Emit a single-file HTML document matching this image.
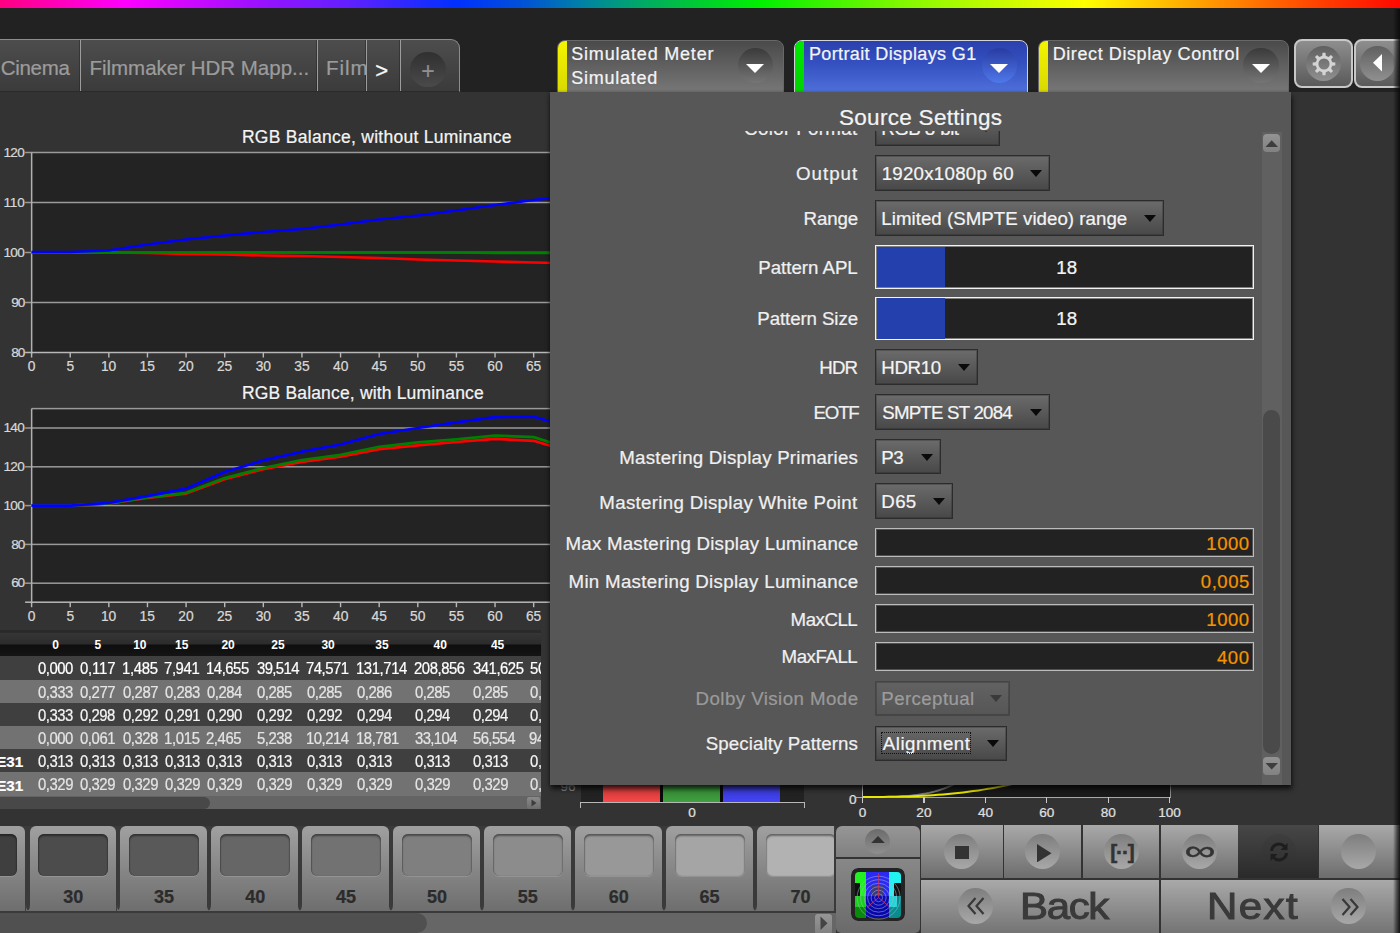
<!DOCTYPE html>
<html><head><meta charset="utf-8"><title>Source Settings</title>
<style>
*{box-sizing:border-box;margin:0;padding:0}
html,body{width:1400px;height:933px;overflow:hidden;background:#333;font-family:"Liberation Sans",sans-serif;color:#f0f0f0}
.abs{position:absolute}
#root{position:relative;width:1400px;height:933px;overflow:hidden;background:#333}
#rainbow{left:0;top:0;width:1400px;height:8.5px;background:linear-gradient(90deg,#ff0080 0,#ff00ff 125px,#a010ff 250px,#6020ff 350px,#0030ff 455px,#0050d8 520px,#0080a8 580px,#00a868 640px,#00cc30 700px,#00f000 760px,#40f400 830px,#80f800 900px,#c8fc00 1000px,#ffff00 1085px,#ffa000 1200px,#ff4000 1320px,#ff0800 1400px)}
#topbar{left:0;top:8px;width:1400px;height:84px;background:#222}
.t{position:absolute;white-space:nowrap;line-height:1;-webkit-text-stroke:.22px currentColor}
</style></head><body><div id="root">
<div id="rainbow" class="abs"></div>
<div id="topbar" class="abs"></div>
<div class="abs" style="left:-10px;top:39.4px;width:469.8px;height:52.6px;background:linear-gradient(#4d4d4d,#3b3b3b);border:1px solid #8c8c8c;border-bottom:1px solid #2a2a2a;border-radius:0 9px 0 0"></div><div class="abs" style="left:78.9px;top:40.4px;width:1px;height:50.6px;background:rgba(30,30,30,.45)"></div><div class="abs" style="left:79.9px;top:40.4px;width:1.1px;height:50.6px;background:#9c9c9c"></div><div class="abs" style="left:315.9px;top:40.4px;width:1px;height:50.6px;background:rgba(30,30,30,.45)"></div><div class="abs" style="left:316.9px;top:40.4px;width:1.1px;height:50.6px;background:#9c9c9c"></div><div class="abs" style="left:365.1px;top:40.4px;width:1px;height:50.6px;background:rgba(30,30,30,.45)"></div><div class="abs" style="left:366.1px;top:40.4px;width:1.1px;height:50.6px;background:#9c9c9c"></div><div class="abs" style="left:399.2px;top:40.4px;width:1px;height:50.6px;background:rgba(30,30,30,.45)"></div><div class="abs" style="left:400.2px;top:40.4px;width:1.1px;height:50.6px;background:#9c9c9c"></div><span class="t" style="left:0.84px;top:57.65px;font-size:20.5px;color:#9c9c9c;letter-spacing:-0.322px;">Cinema</span><span class="t" style="left:89.40px;top:57.65px;font-size:20.5px;color:#9c9c9c;letter-spacing:-0.005px;">Filmmaker HDR Mapp...</span><div class="abs" style="left:318px;top:41px;width:48px;height:50px;overflow:hidden"><span class="t" style="left:8.00px;top:16.65px;font-size:20.5px;color:#9c9c9c;letter-spacing:0.981px;">Film</span></div><span class="t" style="left:375.37px;top:60.18px;font-size:22px;color:#f8f8f8;-webkit-text-stroke:.3px #f8f8f8;">&gt;</span><div class="abs" style="left:410.4px;top:51.99999999999999px;width:35.2px;height:35.2px;background:linear-gradient(#303030,#4a4a4a);border-radius:50%"></div><span class="t" style="left:421.37px;top:59.53px;font-size:23px;color:#909090;">+</span>
<div class="abs" style="left:31.6px;top:152.5px;width:528.4px;height:200px;background:#232323"></div><svg class="abs" style="left:0;top:0" width="560" height="700"><rect x="25.1" y="151.75" width="560" height="1.5" fill="#9a9a9a"/><rect x="25.1" y="201.75" width="560" height="1.5" fill="#9a9a9a"/><rect x="25.1" y="251.75" width="560" height="1.5" fill="#9a9a9a"/><rect x="25.1" y="301.75" width="560" height="1.5" fill="#9a9a9a"/><rect x="30.900000000000002" y="152.5" width="1.5" height="201.0" fill="#b0b0b0"/><rect x="25.1" y="351.75" width="560" height="1.5" fill="#b8b8b8"/><rect x="30.90" y="352.5" width="1.4" height="5" fill="#b8b8b8"/><rect x="69.52" y="352.5" width="1.4" height="5" fill="#b8b8b8"/><rect x="108.14" y="352.5" width="1.4" height="5" fill="#b8b8b8"/><rect x="146.76" y="352.5" width="1.4" height="5" fill="#b8b8b8"/><rect x="185.38" y="352.5" width="1.4" height="5" fill="#b8b8b8"/><rect x="224.00" y="352.5" width="1.4" height="5" fill="#b8b8b8"/><rect x="262.62" y="352.5" width="1.4" height="5" fill="#b8b8b8"/><rect x="301.24" y="352.5" width="1.4" height="5" fill="#b8b8b8"/><rect x="339.86" y="352.5" width="1.4" height="5" fill="#b8b8b8"/><rect x="378.48" y="352.5" width="1.4" height="5" fill="#b8b8b8"/><rect x="417.10" y="352.5" width="1.4" height="5" fill="#b8b8b8"/><rect x="455.72" y="352.5" width="1.4" height="5" fill="#b8b8b8"/><rect x="494.34" y="352.5" width="1.4" height="5" fill="#b8b8b8"/><rect x="532.96" y="352.5" width="1.4" height="5" fill="#b8b8b8"/><polyline points="31.6,252.5 70.2,252.5 108.8,252.5 147.5,253.0 186.1,253.8 224.7,254.5 263.3,255.5 301.9,256.0 340.6,257.0 379.2,258.0 417.8,259.5 456.4,260.5 495.0,261.5 533.7,262.5 556.8,263.0" fill="none" stroke="#ff0000" stroke-width="2.7" stroke-linejoin="round"/><polyline points="31.6,252.5 70.2,252.5 108.8,252.5 147.5,252.5 186.1,252.5 224.7,252.5 263.3,252.5 301.9,252.5 340.6,252.5 379.2,252.5 417.8,252.5 456.4,252.5 495.0,252.8 533.7,253.0 556.8,253.0" fill="none" stroke="#008000" stroke-width="2.7" stroke-linejoin="round"/><polyline points="31.6,252.0 70.2,252.0 108.8,250.5 147.5,244.5 186.1,239.5 224.7,235.5 263.3,232.0 301.9,229.0 340.6,224.5 379.2,219.5 417.8,215.5 456.4,210.5 495.0,205.0 533.7,200.0 556.8,197.5" fill="none" stroke="#0000ff" stroke-width="2.7" stroke-linejoin="round"/></svg><span class="t" style="left:241.93px;top:128.69px;font-size:17.5px;color:#f4f4f4;letter-spacing:0.273px;">RGB Balance, without Luminance</span><span class="t" style="left:3.50px;top:145.79px;font-size:13.6px;color:#d8d8d8;letter-spacing:-0.693px;">120</span><span class="t" style="left:3.50px;top:195.79px;font-size:13.6px;color:#d8d8d8;letter-spacing:-0.185px;">110</span><span class="t" style="left:3.50px;top:245.79px;font-size:13.6px;color:#d8d8d8;letter-spacing:-0.693px;">100</span><span class="t" style="left:11.28px;top:295.79px;font-size:13.6px;color:#d8d8d8;letter-spacing:-1.200px;">90</span><span class="t" style="left:11.34px;top:345.79px;font-size:13.6px;color:#d8d8d8;letter-spacing:-1.200px;">80</span><span class="t" style="left:27.75px;top:360.32px;font-size:13.8px;color:#d8d8d8;">0</span><span class="t" style="left:66.40px;top:360.32px;font-size:13.8px;color:#d8d8d8;">5</span><span class="t" style="left:100.90px;top:360.32px;font-size:13.8px;color:#d8d8d8;">10</span><span class="t" style="left:139.56px;top:360.32px;font-size:13.8px;color:#d8d8d8;">15</span><span class="t" style="left:178.30px;top:360.32px;font-size:13.8px;color:#d8d8d8;">20</span><span class="t" style="left:216.95px;top:360.32px;font-size:13.8px;color:#d8d8d8;">25</span><span class="t" style="left:255.63px;top:360.32px;font-size:13.8px;color:#d8d8d8;">30</span><span class="t" style="left:294.29px;top:360.32px;font-size:13.8px;color:#d8d8d8;">35</span><span class="t" style="left:332.97px;top:360.32px;font-size:13.8px;color:#d8d8d8;">40</span><span class="t" style="left:371.62px;top:360.32px;font-size:13.8px;color:#d8d8d8;">45</span><span class="t" style="left:410.11px;top:360.32px;font-size:13.8px;color:#d8d8d8;">50</span><span class="t" style="left:448.77px;top:360.32px;font-size:13.8px;color:#d8d8d8;">55</span><span class="t" style="left:487.26px;top:360.32px;font-size:13.8px;color:#d8d8d8;">60</span><span class="t" style="left:525.91px;top:360.32px;font-size:13.8px;color:#d8d8d8;">65</span><div class="abs" style="left:31.6px;top:408.6px;width:528.4px;height:193.6px;background:#232323"></div><svg class="abs" style="left:0;top:0" width="560" height="700"><rect x="31.6" y="407.85" width="560" height="1.5" fill="#9a9a9a"/><rect x="25.1" y="427.25" width="560" height="1.5" fill="#9a9a9a"/><rect x="25.1" y="466.05" width="560" height="1.5" fill="#9a9a9a"/><rect x="25.1" y="504.85" width="560" height="1.5" fill="#9a9a9a"/><rect x="25.1" y="543.65" width="560" height="1.5" fill="#9a9a9a"/><rect x="25.1" y="582.45" width="560" height="1.5" fill="#9a9a9a"/><rect x="30.900000000000002" y="408.6" width="1.5" height="194.60000000000002" fill="#b0b0b0"/><rect x="25.1" y="601.45" width="560" height="1.5" fill="#b8b8b8"/><rect x="30.90" y="602.2" width="1.4" height="5" fill="#b8b8b8"/><rect x="69.52" y="602.2" width="1.4" height="5" fill="#b8b8b8"/><rect x="108.14" y="602.2" width="1.4" height="5" fill="#b8b8b8"/><rect x="146.76" y="602.2" width="1.4" height="5" fill="#b8b8b8"/><rect x="185.38" y="602.2" width="1.4" height="5" fill="#b8b8b8"/><rect x="224.00" y="602.2" width="1.4" height="5" fill="#b8b8b8"/><rect x="262.62" y="602.2" width="1.4" height="5" fill="#b8b8b8"/><rect x="301.24" y="602.2" width="1.4" height="5" fill="#b8b8b8"/><rect x="339.86" y="602.2" width="1.4" height="5" fill="#b8b8b8"/><rect x="378.48" y="602.2" width="1.4" height="5" fill="#b8b8b8"/><rect x="417.10" y="602.2" width="1.4" height="5" fill="#b8b8b8"/><rect x="455.72" y="602.2" width="1.4" height="5" fill="#b8b8b8"/><rect x="494.34" y="602.2" width="1.4" height="5" fill="#b8b8b8"/><rect x="532.96" y="602.2" width="1.4" height="5" fill="#b8b8b8"/><polyline points="31.6,505.6 70.2,505.6 108.8,503.5 147.5,498.0 186.1,493.6 224.7,479.2 263.3,469.1 301.9,462.0 340.6,456.7 379.2,449.1 417.8,445.3 456.4,442.0 495.0,438.9 533.7,440.8 556.8,447.8" fill="none" stroke="#ff0000" stroke-width="2.7" stroke-linejoin="round"/><polyline points="31.6,505.6 70.2,505.6 108.8,503.3 147.5,497.5 186.1,492.8 224.7,478.1 263.3,468.0 301.9,460.0 340.6,454.8 379.2,446.8 417.8,442.4 456.4,439.3 495.0,435.6 533.7,437.1 556.8,444.5" fill="none" stroke="#008000" stroke-width="2.7" stroke-linejoin="round"/><polyline points="31.6,505.6 70.2,505.6 108.8,502.9 147.5,496.1 186.1,488.7 224.7,472.0 263.3,460.4 301.9,451.7 340.6,444.5 379.2,434.0 417.8,428.0 456.4,422.4 495.0,417.1 533.7,416.7 556.8,423.2" fill="none" stroke="#0000ff" stroke-width="2.7" stroke-linejoin="round"/></svg><span class="t" style="left:241.93px;top:384.69px;font-size:17.5px;color:#f4f4f4;letter-spacing:0.170px;">RGB Balance, with Luminance</span><span class="t" style="left:3.50px;top:421.29px;font-size:13.6px;color:#d8d8d8;letter-spacing:-0.693px;">140</span><span class="t" style="left:3.50px;top:460.09px;font-size:13.6px;color:#d8d8d8;letter-spacing:-0.693px;">120</span><span class="t" style="left:3.50px;top:498.89px;font-size:13.6px;color:#d8d8d8;letter-spacing:-0.693px;">100</span><span class="t" style="left:11.34px;top:537.69px;font-size:13.6px;color:#d8d8d8;letter-spacing:-1.200px;">80</span><span class="t" style="left:11.21px;top:576.49px;font-size:13.6px;color:#d8d8d8;letter-spacing:-1.200px;">60</span><span class="t" style="left:27.75px;top:610.32px;font-size:13.8px;color:#d8d8d8;">0</span><span class="t" style="left:66.40px;top:610.32px;font-size:13.8px;color:#d8d8d8;">5</span><span class="t" style="left:100.90px;top:610.32px;font-size:13.8px;color:#d8d8d8;">10</span><span class="t" style="left:139.56px;top:610.32px;font-size:13.8px;color:#d8d8d8;">15</span><span class="t" style="left:178.30px;top:610.32px;font-size:13.8px;color:#d8d8d8;">20</span><span class="t" style="left:216.95px;top:610.32px;font-size:13.8px;color:#d8d8d8;">25</span><span class="t" style="left:255.63px;top:610.32px;font-size:13.8px;color:#d8d8d8;">30</span><span class="t" style="left:294.29px;top:610.32px;font-size:13.8px;color:#d8d8d8;">35</span><span class="t" style="left:332.97px;top:610.32px;font-size:13.8px;color:#d8d8d8;">40</span><span class="t" style="left:371.62px;top:610.32px;font-size:13.8px;color:#d8d8d8;">45</span><span class="t" style="left:410.11px;top:610.32px;font-size:13.8px;color:#d8d8d8;">50</span><span class="t" style="left:448.77px;top:610.32px;font-size:13.8px;color:#d8d8d8;">55</span><span class="t" style="left:487.26px;top:610.32px;font-size:13.8px;color:#d8d8d8;">60</span><span class="t" style="left:525.91px;top:610.32px;font-size:13.8px;color:#d8d8d8;">65</span>
<div class="abs" style="left:0px;top:630px;width:540.6px;height:3px;background:#2a2a2a"></div><div class="abs" style="left:0px;top:632.6px;width:540.6px;height:23.4px;background:linear-gradient(#363636 0,#2c2c2c 46%,#0e0e0e 54%,#141414 100%)"></div><span class="t" style="left:52.18px;top:639.04px;font-size:12px;color:#fff;font-weight:700;-webkit-text-stroke:0;">0</span><span class="t" style="left:94.40px;top:639.04px;font-size:12px;color:#fff;font-weight:700;-webkit-text-stroke:0;">5</span><span class="t" style="left:133.19px;top:639.04px;font-size:12px;color:#fff;font-weight:700;-webkit-text-stroke:0;">10</span><span class="t" style="left:175.09px;top:639.04px;font-size:12px;color:#fff;font-weight:700;-webkit-text-stroke:0;">15</span><span class="t" style="left:221.38px;top:639.04px;font-size:12px;color:#fff;font-weight:700;-webkit-text-stroke:0;">20</span><span class="t" style="left:271.28px;top:639.04px;font-size:12px;color:#fff;font-weight:700;-webkit-text-stroke:0;">25</span><span class="t" style="left:321.44px;top:639.04px;font-size:12px;color:#fff;font-weight:700;-webkit-text-stroke:0;">30</span><span class="t" style="left:375.34px;top:639.04px;font-size:12px;color:#fff;font-weight:700;-webkit-text-stroke:0;">35</span><span class="t" style="left:433.50px;top:639.04px;font-size:12px;color:#fff;font-weight:700;-webkit-text-stroke:0;">40</span><span class="t" style="left:490.91px;top:639.04px;font-size:12px;color:#fff;font-weight:700;-webkit-text-stroke:0;">45</span><div class="abs" style="left:0;top:0;width:540.6px;height:800px;overflow:hidden"><div class="abs" style="left:0px;top:656px;width:540.6px;height:23.7px;background:#3f3f3f"></div><span class="t" style="left:38.02px;top:661.31px;font-size:16px;color:#fff;letter-spacing:-0.515px;transform:scaleX(0.93);transform-origin:0 0;">0,000</span><span class="t" style="left:80.02px;top:661.31px;font-size:16px;color:#fff;letter-spacing:-0.172px;transform:scaleX(0.93);transform-origin:0 0;">0,117</span><span class="t" style="left:122.00px;top:661.31px;font-size:16px;color:#fff;letter-spacing:-0.359px;transform:scaleX(0.93);transform-origin:0 0;">1,485</span><span class="t" style="left:164.34px;top:661.31px;font-size:16px;color:#fff;letter-spacing:-0.422px;transform:scaleX(0.93);transform-origin:0 0;">7,941</span><span class="t" style="left:206.00px;top:661.31px;font-size:16px;color:#fff;letter-spacing:-0.496px;transform:scaleX(0.93);transform-origin:0 0;">14,655</span><span class="t" style="left:256.58px;top:661.31px;font-size:16px;color:#fff;letter-spacing:-0.658px;transform:scaleX(0.93);transform-origin:0 0;">39,514</span><span class="t" style="left:306.34px;top:661.31px;font-size:16px;color:#fff;letter-spacing:-0.546px;transform:scaleX(0.93);transform-origin:0 0;">74,571</span><span class="t" style="left:356.00px;top:661.31px;font-size:16px;color:#fff;letter-spacing:-0.441px;transform:scaleX(0.93);transform-origin:0 0;">131,714</span><span class="t" style="left:414.40px;top:661.31px;font-size:16px;color:#fff;letter-spacing:-0.483px;transform:scaleX(0.93);transform-origin:0 0;">208,856</span><span class="t" style="left:472.58px;top:661.31px;font-size:16px;color:#fff;letter-spacing:-0.514px;transform:scaleX(0.93);transform-origin:0 0;">341,625</span><span class="t" style="left:529.52px;top:661.31px;font-size:16px;color:#fff;transform:scaleX(0.93);transform-origin:0 0;letter-spacing:-.4px;">50</span><div class="abs" style="left:0px;top:679.7px;width:540.6px;height:23.2px;background:#727272"></div><span class="t" style="left:38.02px;top:684.76px;font-size:16px;color:#e4e4e4;letter-spacing:-0.500px;transform:scaleX(0.93);transform-origin:0 0;">0,333</span><span class="t" style="left:80.02px;top:684.76px;font-size:16px;color:#e4e4e4;letter-spacing:-0.469px;transform:scaleX(0.93);transform-origin:0 0;">0,277</span><span class="t" style="left:122.52px;top:684.76px;font-size:16px;color:#e4e4e4;letter-spacing:-0.469px;transform:scaleX(0.93);transform-origin:0 0;">0,287</span><span class="t" style="left:164.52px;top:684.76px;font-size:16px;color:#e4e4e4;letter-spacing:-0.500px;transform:scaleX(0.93);transform-origin:0 0;">0,283</span><span class="t" style="left:206.52px;top:684.76px;font-size:16px;color:#e4e4e4;letter-spacing:-0.547px;transform:scaleX(0.93);transform-origin:0 0;">0,284</span><span class="t" style="left:256.52px;top:684.76px;font-size:16px;color:#e4e4e4;letter-spacing:-0.500px;transform:scaleX(0.93);transform-origin:0 0;">0,285</span><span class="t" style="left:306.52px;top:684.76px;font-size:16px;color:#e4e4e4;letter-spacing:-0.500px;transform:scaleX(0.93);transform-origin:0 0;">0,285</span><span class="t" style="left:356.52px;top:684.76px;font-size:16px;color:#e4e4e4;letter-spacing:-0.500px;transform:scaleX(0.93);transform-origin:0 0;">0,286</span><span class="t" style="left:414.52px;top:684.76px;font-size:16px;color:#e4e4e4;letter-spacing:-0.500px;transform:scaleX(0.93);transform-origin:0 0;">0,285</span><span class="t" style="left:472.52px;top:684.76px;font-size:16px;color:#e4e4e4;letter-spacing:-0.500px;transform:scaleX(0.93);transform-origin:0 0;">0,285</span><span class="t" style="left:529.52px;top:684.76px;font-size:16px;color:#e4e4e4;transform:scaleX(0.93);transform-origin:0 0;letter-spacing:-.4px;">0,</span><div class="abs" style="left:0px;top:702.9px;width:540.6px;height:23.1px;background:#3f3f3f"></div><span class="t" style="left:38.02px;top:707.91px;font-size:16px;color:#f4f4f4;letter-spacing:-0.500px;transform:scaleX(0.93);transform-origin:0 0;">0,333</span><span class="t" style="left:80.02px;top:707.91px;font-size:16px;color:#f4f4f4;letter-spacing:-0.500px;transform:scaleX(0.93);transform-origin:0 0;">0,298</span><span class="t" style="left:122.52px;top:707.91px;font-size:16px;color:#f4f4f4;letter-spacing:-0.469px;transform:scaleX(0.93);transform-origin:0 0;">0,292</span><span class="t" style="left:164.52px;top:707.91px;font-size:16px;color:#f4f4f4;letter-spacing:-0.469px;transform:scaleX(0.93);transform-origin:0 0;">0,291</span><span class="t" style="left:206.52px;top:707.91px;font-size:16px;color:#f4f4f4;letter-spacing:-0.515px;transform:scaleX(0.93);transform-origin:0 0;">0,290</span><span class="t" style="left:256.52px;top:707.91px;font-size:16px;color:#f4f4f4;letter-spacing:-0.469px;transform:scaleX(0.93);transform-origin:0 0;">0,292</span><span class="t" style="left:306.52px;top:707.91px;font-size:16px;color:#f4f4f4;letter-spacing:-0.469px;transform:scaleX(0.93);transform-origin:0 0;">0,292</span><span class="t" style="left:356.52px;top:707.91px;font-size:16px;color:#f4f4f4;letter-spacing:-0.547px;transform:scaleX(0.93);transform-origin:0 0;">0,294</span><span class="t" style="left:414.52px;top:707.91px;font-size:16px;color:#f4f4f4;letter-spacing:-0.547px;transform:scaleX(0.93);transform-origin:0 0;">0,294</span><span class="t" style="left:472.52px;top:707.91px;font-size:16px;color:#f4f4f4;letter-spacing:-0.547px;transform:scaleX(0.93);transform-origin:0 0;">0,294</span><span class="t" style="left:529.52px;top:707.91px;font-size:16px;color:#f4f4f4;transform:scaleX(0.93);transform-origin:0 0;letter-spacing:-.4px;">0,</span><div class="abs" style="left:0px;top:726px;width:540.6px;height:22.9px;background:#727272"></div><span class="t" style="left:38.02px;top:730.91px;font-size:16px;color:#e4e4e4;letter-spacing:-0.515px;transform:scaleX(0.93);transform-origin:0 0;">0,000</span><span class="t" style="left:80.02px;top:730.91px;font-size:16px;color:#e4e4e4;letter-spacing:-0.469px;transform:scaleX(0.93);transform-origin:0 0;">0,061</span><span class="t" style="left:122.52px;top:730.91px;font-size:16px;color:#e4e4e4;letter-spacing:-0.500px;transform:scaleX(0.93);transform-origin:0 0;">0,328</span><span class="t" style="left:164.00px;top:730.91px;font-size:16px;color:#e4e4e4;letter-spacing:-0.359px;transform:scaleX(0.93);transform-origin:0 0;">1,015</span><span class="t" style="left:206.40px;top:730.91px;font-size:16px;color:#e4e4e4;letter-spacing:-0.469px;transform:scaleX(0.93);transform-origin:0 0;">2,465</span><span class="t" style="left:256.52px;top:730.91px;font-size:16px;color:#e4e4e4;letter-spacing:-0.500px;transform:scaleX(0.93);transform-origin:0 0;">5,238</span><span class="t" style="left:306.00px;top:730.91px;font-size:16px;color:#e4e4e4;letter-spacing:-0.533px;transform:scaleX(0.93);transform-origin:0 0;">10,214</span><span class="t" style="left:356.00px;top:730.91px;font-size:16px;color:#e4e4e4;letter-spacing:-0.471px;transform:scaleX(0.93);transform-origin:0 0;">18,781</span><span class="t" style="left:414.58px;top:730.91px;font-size:16px;color:#e4e4e4;letter-spacing:-0.658px;transform:scaleX(0.93);transform-origin:0 0;">33,104</span><span class="t" style="left:472.52px;top:730.91px;font-size:16px;color:#e4e4e4;letter-spacing:-0.646px;transform:scaleX(0.93);transform-origin:0 0;">56,554</span><span class="t" style="left:529.40px;top:730.91px;font-size:16px;color:#e4e4e4;transform:scaleX(0.93);transform-origin:0 0;letter-spacing:-.4px;">94</span><div class="abs" style="left:0px;top:748.9px;width:540.6px;height:22.9px;background:#3f3f3f"></div><span class="t" style="left:-3.84px;top:754.18px;font-size:15.2px;color:#fff;font-weight:700;">E31</span><span class="t" style="left:38.02px;top:753.81px;font-size:16px;color:#f4f4f4;letter-spacing:-0.500px;transform:scaleX(0.93);transform-origin:0 0;">0,313</span><span class="t" style="left:80.02px;top:753.81px;font-size:16px;color:#f4f4f4;letter-spacing:-0.500px;transform:scaleX(0.93);transform-origin:0 0;">0,313</span><span class="t" style="left:122.52px;top:753.81px;font-size:16px;color:#f4f4f4;letter-spacing:-0.500px;transform:scaleX(0.93);transform-origin:0 0;">0,313</span><span class="t" style="left:164.52px;top:753.81px;font-size:16px;color:#f4f4f4;letter-spacing:-0.500px;transform:scaleX(0.93);transform-origin:0 0;">0,313</span><span class="t" style="left:206.52px;top:753.81px;font-size:16px;color:#f4f4f4;letter-spacing:-0.500px;transform:scaleX(0.93);transform-origin:0 0;">0,313</span><span class="t" style="left:256.52px;top:753.81px;font-size:16px;color:#f4f4f4;letter-spacing:-0.500px;transform:scaleX(0.93);transform-origin:0 0;">0,313</span><span class="t" style="left:306.52px;top:753.81px;font-size:16px;color:#f4f4f4;letter-spacing:-0.500px;transform:scaleX(0.93);transform-origin:0 0;">0,313</span><span class="t" style="left:356.52px;top:753.81px;font-size:16px;color:#f4f4f4;letter-spacing:-0.500px;transform:scaleX(0.93);transform-origin:0 0;">0,313</span><span class="t" style="left:414.52px;top:753.81px;font-size:16px;color:#f4f4f4;letter-spacing:-0.500px;transform:scaleX(0.93);transform-origin:0 0;">0,313</span><span class="t" style="left:472.52px;top:753.81px;font-size:16px;color:#f4f4f4;letter-spacing:-0.500px;transform:scaleX(0.93);transform-origin:0 0;">0,313</span><span class="t" style="left:529.52px;top:753.81px;font-size:16px;color:#f4f4f4;transform:scaleX(0.93);transform-origin:0 0;letter-spacing:-.4px;">0,</span><div class="abs" style="left:0px;top:771.8px;width:540.6px;height:23.8px;background:#727272"></div><span class="t" style="left:-3.84px;top:777.53px;font-size:15.2px;color:#fff;font-weight:700;">E31</span><span class="t" style="left:38.02px;top:777.16px;font-size:16px;color:#e4e4e4;letter-spacing:-0.484px;transform:scaleX(0.93);transform-origin:0 0;">0,329</span><span class="t" style="left:80.02px;top:777.16px;font-size:16px;color:#e4e4e4;letter-spacing:-0.484px;transform:scaleX(0.93);transform-origin:0 0;">0,329</span><span class="t" style="left:122.52px;top:777.16px;font-size:16px;color:#e4e4e4;letter-spacing:-0.484px;transform:scaleX(0.93);transform-origin:0 0;">0,329</span><span class="t" style="left:164.52px;top:777.16px;font-size:16px;color:#e4e4e4;letter-spacing:-0.484px;transform:scaleX(0.93);transform-origin:0 0;">0,329</span><span class="t" style="left:206.52px;top:777.16px;font-size:16px;color:#e4e4e4;letter-spacing:-0.484px;transform:scaleX(0.93);transform-origin:0 0;">0,329</span><span class="t" style="left:256.52px;top:777.16px;font-size:16px;color:#e4e4e4;letter-spacing:-0.484px;transform:scaleX(0.93);transform-origin:0 0;">0,329</span><span class="t" style="left:306.52px;top:777.16px;font-size:16px;color:#e4e4e4;letter-spacing:-0.484px;transform:scaleX(0.93);transform-origin:0 0;">0,329</span><span class="t" style="left:356.52px;top:777.16px;font-size:16px;color:#e4e4e4;letter-spacing:-0.484px;transform:scaleX(0.93);transform-origin:0 0;">0,329</span><span class="t" style="left:414.52px;top:777.16px;font-size:16px;color:#e4e4e4;letter-spacing:-0.484px;transform:scaleX(0.93);transform-origin:0 0;">0,329</span><span class="t" style="left:472.52px;top:777.16px;font-size:16px;color:#e4e4e4;letter-spacing:-0.484px;transform:scaleX(0.93);transform-origin:0 0;">0,329</span><span class="t" style="left:529.52px;top:777.16px;font-size:16px;color:#e4e4e4;transform:scaleX(0.93);transform-origin:0 0;letter-spacing:-.4px;">0,</span></div><div class="abs" style="left:0px;top:796px;width:540.6px;height:13px;background:#646464"></div><div class="abs" style="left:-10px;top:796.5px;width:220px;height:12px;background:#484848;border-radius:6px"></div><div class="abs" style="left:527px;top:797px;width:13px;height:11.8px;background:linear-gradient(#8a8a8a,#6c6c6c);border-radius:2px"><svg width="13" height="12" style="display:block"><path d="M4.5 2.5L9.5 6L4.5 9.5Z" fill="#3c3c3c"/></svg></div>
<div class="abs" style="left:0px;top:822px;width:836px;height:111px;background:#3a3a3a"></div><div class="abs" style="left:0px;top:809px;width:1400px;height:16.5px;background:#333"></div><div class="abs" style="left:0;top:0;width:833.8px;height:933px;overflow:hidden"><div class="abs" style="left:-61.45px;top:825.6px;width:86.9px;height:85.4px;background:linear-gradient(#a0a0a0,#6e6e6e);border-radius:6px 6px 0 0"></div><div class="abs" style="left:-52.650000000000006px;top:834px;width:69.8px;height:42.2px;background:rgb(63,63,63);border-radius:6px;box-shadow:inset 0 2px 2px rgba(0,0,0,.42),inset 1px 0 1px rgba(0,0,0,.18),inset -1px 0 1px rgba(0,0,0,.12),0 1px 0 rgba(255,255,255,.14)"></div><span class="t" style="left:-28.07px;top:888.36px;font-size:18px;color:#2b2b2b;font-weight:700;">25</span><svg class="abs" style="left:-64.45px;top:904px" width="92.90" height="7"><path d="M3 0Q3 6 0 7H3Z" fill="#6e6e6e"/><path d="M89.90 0Q89.90 6 92.90 7H89.90Z" fill="#6e6e6e"/></svg><div class="abs" style="left:29.5px;top:825.6px;width:86.9px;height:85.4px;background:linear-gradient(#a0a0a0,#6e6e6e);border-radius:6px 6px 0 0"></div><div class="abs" style="left:38.3px;top:834px;width:69.8px;height:42.2px;background:rgb(76,76,76);border-radius:6px;box-shadow:inset 0 2px 2px rgba(0,0,0,.42),inset 1px 0 1px rgba(0,0,0,.18),inset -1px 0 1px rgba(0,0,0,.12),0 1px 0 rgba(255,255,255,.14)"></div><span class="t" style="left:63.16px;top:888.36px;font-size:18px;color:#2b2b2b;font-weight:700;">30</span><svg class="abs" style="left:26.50px;top:904px" width="92.90" height="7"><path d="M3 0Q3 6 0 7H3Z" fill="#6e6e6e"/><path d="M89.90 0Q89.90 6 92.90 7H89.90Z" fill="#6e6e6e"/></svg><div class="abs" style="left:120.45px;top:825.6px;width:86.9px;height:85.4px;background:linear-gradient(#a0a0a0,#6e6e6e);border-radius:6px 6px 0 0"></div><div class="abs" style="left:129.25px;top:834px;width:69.8px;height:42.2px;background:rgb(89,89,89);border-radius:6px;box-shadow:inset 0 2px 2px rgba(0,0,0,.42),inset 1px 0 1px rgba(0,0,0,.18),inset -1px 0 1px rgba(0,0,0,.12),0 1px 0 rgba(255,255,255,.14)"></div><span class="t" style="left:153.97px;top:888.36px;font-size:18px;color:#2b2b2b;font-weight:700;">35</span><svg class="abs" style="left:117.45px;top:904px" width="92.90" height="7"><path d="M3 0Q3 6 0 7H3Z" fill="#6e6e6e"/><path d="M89.90 0Q89.90 6 92.90 7H89.90Z" fill="#6e6e6e"/></svg><div class="abs" style="left:211.40000000000003px;top:825.6px;width:86.9px;height:85.4px;background:linear-gradient(#a0a0a0,#6e6e6e);border-radius:6px 6px 0 0"></div><div class="abs" style="left:220.20000000000005px;top:834px;width:69.8px;height:42.2px;background:rgb(102,102,102);border-radius:6px;box-shadow:inset 0 2px 2px rgba(0,0,0,.42),inset 1px 0 1px rgba(0,0,0,.18),inset -1px 0 1px rgba(0,0,0,.12),0 1px 0 rgba(255,255,255,.14)"></div><span class="t" style="left:245.20px;top:888.36px;font-size:18px;color:#2b2b2b;font-weight:700;">40</span><svg class="abs" style="left:208.40px;top:904px" width="92.90" height="7"><path d="M3 0Q3 6 0 7H3Z" fill="#6e6e6e"/><path d="M89.90 0Q89.90 6 92.90 7H89.90Z" fill="#6e6e6e"/></svg><div class="abs" style="left:302.35px;top:825.6px;width:86.9px;height:85.4px;background:linear-gradient(#a0a0a0,#6e6e6e);border-radius:6px 6px 0 0"></div><div class="abs" style="left:311.15000000000003px;top:834px;width:69.8px;height:42.2px;background:rgb(114,114,114);border-radius:6px;box-shadow:inset 0 2px 2px rgba(0,0,0,.42),inset 1px 0 1px rgba(0,0,0,.18),inset -1px 0 1px rgba(0,0,0,.12),0 1px 0 rgba(255,255,255,.14)"></div><span class="t" style="left:336.01px;top:888.36px;font-size:18px;color:#2b2b2b;font-weight:700;">45</span><svg class="abs" style="left:299.35px;top:904px" width="92.90" height="7"><path d="M3 0Q3 6 0 7H3Z" fill="#6e6e6e"/><path d="M89.90 0Q89.90 6 92.90 7H89.90Z" fill="#6e6e6e"/></svg><div class="abs" style="left:393.3px;top:825.6px;width:86.9px;height:85.4px;background:linear-gradient(#a0a0a0,#6e6e6e);border-radius:6px 6px 0 0"></div><div class="abs" style="left:402.1px;top:834px;width:69.8px;height:42.2px;background:rgb(127,127,127);border-radius:6px;box-shadow:inset 0 2px 2px rgba(0,0,0,.42),inset 1px 0 1px rgba(0,0,0,.18),inset -1px 0 1px rgba(0,0,0,.12),0 1px 0 rgba(255,255,255,.14)"></div><span class="t" style="left:426.96px;top:888.36px;font-size:18px;color:#2b2b2b;font-weight:700;">50</span><svg class="abs" style="left:390.30px;top:904px" width="92.90" height="7"><path d="M3 0Q3 6 0 7H3Z" fill="#6e6e6e"/><path d="M89.90 0Q89.90 6 92.90 7H89.90Z" fill="#6e6e6e"/></svg><div class="abs" style="left:484.25000000000006px;top:825.6px;width:86.9px;height:85.4px;background:linear-gradient(#a0a0a0,#6e6e6e);border-radius:6px 6px 0 0"></div><div class="abs" style="left:493.05000000000007px;top:834px;width:69.8px;height:42.2px;background:rgb(140,140,140);border-radius:6px;box-shadow:inset 0 2px 2px rgba(0,0,0,.42),inset 1px 0 1px rgba(0,0,0,.18),inset -1px 0 1px rgba(0,0,0,.12),0 1px 0 rgba(255,255,255,.14)"></div><span class="t" style="left:517.77px;top:888.36px;font-size:18px;color:#2b2b2b;font-weight:700;">55</span><svg class="abs" style="left:481.25px;top:904px" width="92.90" height="7"><path d="M3 0Q3 6 0 7H3Z" fill="#6e6e6e"/><path d="M89.90 0Q89.90 6 92.90 7H89.90Z" fill="#6e6e6e"/></svg><div class="abs" style="left:575.1999999999999px;top:825.6px;width:86.9px;height:85.4px;background:linear-gradient(#a0a0a0,#6e6e6e);border-radius:6px 6px 0 0"></div><div class="abs" style="left:583.9999999999999px;top:834px;width:69.8px;height:42.2px;background:rgb(152,152,152);border-radius:6px;box-shadow:inset 0 2px 2px rgba(0,0,0,.42),inset 1px 0 1px rgba(0,0,0,.18),inset -1px 0 1px rgba(0,0,0,.12),0 1px 0 rgba(255,255,255,.14)"></div><span class="t" style="left:608.72px;top:888.36px;font-size:18px;color:#2b2b2b;font-weight:700;">60</span><svg class="abs" style="left:572.20px;top:904px" width="92.90" height="7"><path d="M3 0Q3 6 0 7H3Z" fill="#6e6e6e"/><path d="M89.90 0Q89.90 6 92.90 7H89.90Z" fill="#6e6e6e"/></svg><div class="abs" style="left:666.15px;top:825.6px;width:86.9px;height:85.4px;background:linear-gradient(#a0a0a0,#6e6e6e);border-radius:6px 6px 0 0"></div><div class="abs" style="left:674.9499999999999px;top:834px;width:69.8px;height:42.2px;background:rgb(165,165,165);border-radius:6px;box-shadow:inset 0 2px 2px rgba(0,0,0,.42),inset 1px 0 1px rgba(0,0,0,.18),inset -1px 0 1px rgba(0,0,0,.12),0 1px 0 rgba(255,255,255,.14)"></div><span class="t" style="left:699.53px;top:888.36px;font-size:18px;color:#2b2b2b;font-weight:700;">65</span><svg class="abs" style="left:663.15px;top:904px" width="92.90" height="7"><path d="M3 0Q3 6 0 7H3Z" fill="#6e6e6e"/><path d="M89.90 0Q89.90 6 92.90 7H89.90Z" fill="#6e6e6e"/></svg><div class="abs" style="left:757.1px;top:825.6px;width:86.9px;height:85.4px;background:linear-gradient(#a0a0a0,#6e6e6e);border-radius:6px 6px 0 0"></div><div class="abs" style="left:765.9px;top:834px;width:69.8px;height:42.2px;background:rgb(178,178,178);border-radius:6px;box-shadow:inset 0 2px 2px rgba(0,0,0,.42),inset 1px 0 1px rgba(0,0,0,.18),inset -1px 0 1px rgba(0,0,0,.12),0 1px 0 rgba(255,255,255,.14)"></div><span class="t" style="left:790.62px;top:888.36px;font-size:18px;color:#2b2b2b;font-weight:700;">70</span><svg class="abs" style="left:754.10px;top:904px" width="92.90" height="7"><path d="M3 0Q3 6 0 7H3Z" fill="#6e6e6e"/><path d="M89.90 0Q89.90 6 92.90 7H89.90Z" fill="#6e6e6e"/></svg></div><div class="abs" style="left:0px;top:912.6px;width:836px;height:20.4px;background:#666"></div><div class="abs" style="left:-20px;top:913.2px;width:447px;height:20.3px;background:#505050;border-radius:0 10px 10px 0"></div><div class="abs" style="left:815.3px;top:913.6px;width:16.9px;height:20.4px;background:linear-gradient(#969696,#808080);border-radius:3px"><svg width="17" height="20" style="display:block"><path d="M5.5 2.5L12.5 9.2L5.5 16Z" fill="#444"/></svg></div><div class="abs" style="left:581px;top:780px;width:223px;height:22px;background:#222"></div><div class="abs" style="left:603px;top:780px;width:57px;height:22px;background:linear-gradient(#b03030,#f84848)"></div><div class="abs" style="left:663px;top:780px;width:57px;height:22px;background:linear-gradient(#2c7a2c,#40a040)"></div><div class="abs" style="left:723px;top:780px;width:57px;height:22px;background:linear-gradient(#3030b0,#4444f8)"></div><div class="abs" style="left:660px;top:780px;width:3px;height:22px;background:#0a0a0a"></div><div class="abs" style="left:720px;top:780px;width:3px;height:22px;background:#0a0a0a"></div><div class="abs" style="left:580.3px;top:802px;width:224.5px;height:1.2px;background:#b8b8b8"></div><div class="abs" style="left:580.3px;top:802px;width:1.2px;height:5.6px;background:#b8b8b8"></div><div class="abs" style="left:803.6px;top:802px;width:1.2px;height:5.6px;background:#b8b8b8"></div><span class="t" style="left:688.22px;top:805.89px;font-size:13.6px;color:#e0e0e0;">0</span><span class="t" style="left:560.38px;top:780.49px;font-size:13.6px;color:#8a8a8a;">96</span><div class="abs" style="left:862.5px;top:780px;width:307.5px;height:17px;background:#1a1a1a"></div><div class="abs" style="left:856px;top:796.7px;width:314.5px;height:1.1px;background:#a8a8a8"></div><div class="abs" style="left:861.8px;top:780px;width:1.2px;height:23px;background:#b4b4b4"></div><div class="abs" style="left:1169.5px;top:780px;width:1px;height:17px;background:#8a8a8a"></div><div class="abs" style="left:861.9px;top:797px;width:1.2px;height:6px;background:#cacaca"></div><span class="t" style="left:858.72px;top:805.89px;font-size:13.6px;color:#e0e0e0;">0</span><div class="abs" style="left:923.35px;top:797px;width:1.2px;height:6px;background:#cacaca"></div><span class="t" style="left:916.33px;top:805.89px;font-size:13.6px;color:#e0e0e0;">20</span><div class="abs" style="left:984.8px;top:797px;width:1.2px;height:6px;background:#cacaca"></div><span class="t" style="left:977.93px;top:805.89px;font-size:13.6px;color:#e0e0e0;">40</span><div class="abs" style="left:1046.25px;top:797px;width:1.2px;height:6px;background:#cacaca"></div><span class="t" style="left:1039.19px;top:805.89px;font-size:13.6px;color:#e0e0e0;">60</span><div class="abs" style="left:1107.7px;top:797px;width:1.2px;height:6px;background:#cacaca"></div><span class="t" style="left:1100.71px;top:805.89px;font-size:13.6px;color:#e0e0e0;">80</span><div class="abs" style="left:1169.15px;top:797px;width:1.2px;height:6px;background:#cacaca"></div><span class="t" style="left:1158.16px;top:805.89px;font-size:13.6px;color:#e0e0e0;">100</span><span class="t" style="left:848.94px;top:792.89px;font-size:13.6px;color:#e0e0e0;">0</span><svg class="abs" style="left:0;top:0" width="1400" height="830"><polyline points="863,797.00 866,797.00 869,797.00 872,797.00 875,796.99 878,796.98 881,796.96 884,796.93 887,796.88 890,796.82 893,796.74 896,796.64 899,796.51 902,796.36 905,796.16 908,795.93 911,795.66 914,795.34 917,794.97 920,794.54 923,794.05 926,793.50 929,792.87 932,792.16 935,791.38 938,790.50 941,789.53 944,788.46 947,787.28 950,786.00 953,784.59 956,783.05 959,781.39 962,779.58 965,777.63 968,775.53 971,773.27 974,770.84" fill="none" stroke="#7a7a7a" stroke-width="2"/><polyline points="863,797.00 868,797.00 873,796.99 878,796.96 883,796.92 888,796.87 893,796.79 898,796.69 903,796.56 908,796.41 913,796.23 918,796.01 923,795.77 928,795.48 933,795.17 938,794.81 943,794.41 948,793.97 953,793.49 958,792.97 963,792.40 968,791.78 973,791.11 978,790.40 983,789.63 988,788.81 993,787.93 998,787.01 1003,786.02 1008,784.98 1013,783.87 1018,782.71 1023,781.49 1028,780.20 1033,778.85 1038,777.44 1043,775.96 1048,774.41 1053,772.79 1058,771.11" fill="none" stroke="#e8e800" stroke-width="2"/></svg><div class="abs" style="left:835.8px;top:825.8px;width:84.4px;height:31.6px;background:linear-gradient(#969696,#808080);border-radius:6px 6px 0 0"></div><div class="abs" style="left:865.0999999999999px;top:828.8px;width:25.4px;height:25.4px;background:linear-gradient(#6c6c6c,#8e8e8e);border-radius:50%"></div><svg class="abs" style="left:870.8px;top:836.2px" width="14" height="7.2"><path d="M0 7.2L7 0L14 7.2Z" fill="#333"/></svg><div class="abs" style="left:835.8px;top:858.6px;width:84.4px;height:74px;background:linear-gradient(#888888,#6a6a6a);border-radius:0 0 5px 5px"></div><div class="abs" style="left:850.8px;top:867.8px;width:54.5px;height:53.7px;overflow:hidden;border-radius:7px"><div class="abs" style="left:0px;top:0px;width:54.5px;height:53.7px;background:#232323;border-radius:7px"></div><div class="abs" style="left:4.0px;top:4.2000000000000455px;width:11.5px;height:11px;background:#22f022;border-radius:4px 0 0 0;"></div><div class="abs" style="left:15.5px;top:4.2000000000000455px;width:22.4px;height:11px;background:#2a2af2;"></div><div class="abs" style="left:37.90000000000009px;top:4.2000000000000455px;width:12.5px;height:11px;background:#22f2f2;border-radius:0 4px 0 0;"></div><div class="abs" style="left:4.0px;top:15.200000000000045px;width:5.7px;height:12.7px;background:#111;"></div><div class="abs" style="left:9.700000000000045px;top:15.200000000000045px;width:5.8px;height:12.7px;background:#22f022;"></div><div class="abs" style="left:15.5px;top:15.200000000000045px;width:22.4px;height:12.7px;background:#2a2af2;"></div><div class="abs" style="left:21.0px;top:17.200000000000045px;width:11.5px;height:10.7px;background:#3c3c78;"></div><div class="abs" style="left:37.90000000000009px;top:15.200000000000045px;width:5.8px;height:12.7px;background:#22f2f2;"></div><div class="abs" style="left:43.700000000000045px;top:15.200000000000045px;width:6.7px;height:12.7px;background:#111;"></div><div class="abs" style="left:4.0px;top:27.90000000000009px;width:11.5px;height:11.3px;background:#18d018;"></div><div class="abs" style="left:15.5px;top:27.90000000000009px;width:22.4px;height:11.3px;background:#0a0ab4;"></div><div class="abs" style="left:37.90000000000009px;top:27.90000000000009px;width:8.3px;height:11.3px;background:#1ed8d8;"></div><div class="abs" style="left:46.200000000000045px;top:27.90000000000009px;width:4.2px;height:11.3px;background:#0c8c8c;"></div><div class="abs" style="left:4.0px;top:39.200000000000045px;width:11.5px;height:11.3px;background:#0a8a0a;border-radius:0 0 0 4px;"></div><div class="abs" style="left:15.5px;top:39.200000000000045px;width:22.4px;height:11.3px;background:#0808a8;"></div><div class="abs" style="left:37.90000000000009px;top:39.200000000000045px;width:12.5px;height:11.3px;background:#0a8c8c;border-radius:0 0 4px 0;"></div><svg class="abs" style="left:0;top:0" width="54.5" height="53.7"><g fill="none" stroke="#aab4d8" stroke-width=".7" opacity=".75"><circle cx="27.6" cy="29.7" r="4"/><circle cx="27.6" cy="29.7" r="7.5"/><circle cx="27.6" cy="29.7" r="11"/><circle cx="27.6" cy="29.7" r="14.5"/><circle cx="27.6" cy="29.7" r="18"/><circle cx="27.6" cy="29.7" r="21.5"/></g><path d="M27.6 5V29.7M27.6 29.7L17 38.5M27.6 29.7L38.2 38.5" stroke="#d83048" stroke-width=".8" fill="none"/></svg></div><div class="abs" style="left:921px;top:825.2px;width:81.6px;height:52.8px;background:linear-gradient(#a9a9a9,#6d6d6d)"></div><div class="abs" style="left:944.1999999999999px;top:834.1px;width:35.2px;height:35.2px;background:linear-gradient(#7e7e7e,#a8a8a8);border-radius:50%"></div><div class="abs" style="left:1004px;top:825.2px;width:77.2px;height:52.8px;background:linear-gradient(#a9a9a9,#6d6d6d)"></div><div class="abs" style="left:1025.0px;top:834.1px;width:35.2px;height:35.2px;background:linear-gradient(#7e7e7e,#a8a8a8);border-radius:50%"></div><div class="abs" style="left:1082.8px;top:825.2px;width:76.6px;height:52.8px;background:linear-gradient(#a9a9a9,#6d6d6d)"></div><div class="abs" style="left:1103.5px;top:834.1px;width:35.2px;height:35.2px;background:linear-gradient(#7e7e7e,#a8a8a8);border-radius:50%"></div><div class="abs" style="left:1161px;top:825.2px;width:77.4px;height:52.8px;background:linear-gradient(#a9a9a9,#6d6d6d)"></div><div class="abs" style="left:1182.1000000000001px;top:834.1px;width:35.2px;height:35.2px;background:linear-gradient(#7e7e7e,#a8a8a8);border-radius:50%"></div><div class="abs" style="left:1238.4px;top:825.2px;width:79.6px;height:52.8px;background:linear-gradient(#474747,#2a2a2a)"></div><div class="abs" style="left:1260.6000000000001px;top:834.1px;width:35.2px;height:35.2px;background:linear-gradient(#3e3e3e,#303030);border-radius:50%"></div><div class="abs" style="left:1319.2px;top:825.2px;width:90.8px;height:52.8px;background:linear-gradient(#a9a9a9,#6d6d6d)"></div><div class="abs" style="left:1341.0px;top:834.1px;width:35.2px;height:35.2px;background:linear-gradient(#7e7e7e,#a8a8a8);border-radius:50%"></div><div class="abs" style="left:955px;top:845.5px;width:13.6px;height:13.5px;background:#333"></div><svg class="abs" style="left:1037px;top:843.6px" width="14.5" height="18.4"><path d="M0 0L14.5 9.2L0 18.4Z" fill="#333"/></svg><span class="t" style="left:1110.32px;top:841.02px;font-size:21px;color:#333;font-weight:700;letter-spacing:-1.200px;-webkit-text-stroke:.5px #333;">[··]</span><span class="t" style="left:1187.84px;top:832.72px;font-size:34px;color:#333;-webkit-text-stroke:.5px #333;transform:scale(1.28,.82);">∞</span><svg class="abs" style="left:1267.6px;top:840.6px" width="22" height="22" viewBox="0 0 22 22"><g fill="none" stroke="#1e1e1e" stroke-width="3"><path d="M3.5 10A7.5 7.5 0 0 1 16.5 5.5"/><path d="M18.5 12A7.5 7.5 0 0 1 5.5 16.5"/></g><path d="M19.5 2V9H12.5Z" fill="#1e1e1e"/><path d="M2.5 20V13H9.5Z" fill="#1e1e1e"/></svg><div class="abs" style="left:921px;top:880.2px;width:238.4px;height:59.8px;background:linear-gradient(#a9a9a9,#6d6d6d)"></div><div class="abs" style="left:1161px;top:880.2px;width:249px;height:59.8px;background:linear-gradient(#a9a9a9,#6d6d6d)"></div><div class="abs" style="left:957.9px;top:888.4px;width:35.2px;height:35.2px;background:linear-gradient(#7e7e7e,#a8a8a8);border-radius:50%"></div><div class="abs" style="left:1330.6000000000001px;top:888.4px;width:35.2px;height:35.2px;background:linear-gradient(#7e7e7e,#a8a8a8);border-radius:50%"></div><svg class="abs" style="left:966.5px;top:896.5px" width="18" height="18"><path d="M8.5 1L1.5 9L8.5 17M16.5 1L9.5 9L16.5 17" fill="none" stroke="#383838" stroke-width="2.2"/></svg><svg class="abs" style="left:1340.5px;top:897.5px" width="18" height="18"><path d="M1.5 1L8.5 9L1.5 17M9.5 1L16.5 9L9.5 17" fill="none" stroke="#383838" stroke-width="2.2"/></svg><span class="t" style="left:1019.92px;top:888.26px;font-size:37.5px;color:#3a3a3a;letter-spacing:-1.200px;transform:scaleX(1.12);transform-origin:0 0;-webkit-text-stroke:1px #3a3a3a;filter:blur(.7px);">Back</span><span class="t" style="left:1207.42px;top:888.26px;font-size:37.5px;color:#3a3a3a;letter-spacing:1.302px;transform:scaleX(1.12);transform-origin:0 0;-webkit-text-stroke:1px #3a3a3a;filter:blur(.7px);">Next</span>
<div class="abs" style="left:556.8px;top:39.5px;width:226.8px;height:56.5px;background:linear-gradient(#4a4a4a,#7a7a7a);border:1px solid #686868;border-radius:8px 8px 0 0;overflow:hidden"><div class="abs" style="left:0;top:0;width:9.2px;height:60px;background:linear-gradient(#f4f400,#d4d400)"></div></div><span class="t" style="left:571.24px;top:45.16px;font-size:18px;color:#f4f4f4;letter-spacing:0.799px;">Simulated Meter</span><span class="t" style="left:571.24px;top:68.86px;font-size:18px;color:#f4f4f4;letter-spacing:0.753px;">Simulated</span><div class="abs" style="left:737.6999999999999px;top:47.7px;width:35.4px;height:35.4px;background:linear-gradient(#3a3a3a,#757575);border-radius:50%"></div><svg class="abs" style="left:746.4px;top:63.6px" width="18" height="9"><path d="M0 0H18L9 9Z" fill="#fff"/></svg><div class="abs" style="left:794px;top:39.5px;width:233.5px;height:56.5px;background:linear-gradient(#2a40ad 0,#3450c0 40%,#5173dc 100%);border:1.5px solid #d2d2da;border-radius:8px 8px 0 0;overflow:hidden"><div class="abs" style="left:0;top:0;width:9.2px;height:60px;background:linear-gradient(#00ea00,#00cc00)"></div></div><span class="t" style="left:808.89px;top:45.16px;font-size:18px;color:#f4f4f4;letter-spacing:0.383px;">Portrait Displays G1</span><div class="abs" style="left:981.5999999999999px;top:47.7px;width:35.4px;height:35.4px;background:linear-gradient(#283ca2,#4f78ea);border-radius:50%"></div><svg class="abs" style="left:990.3px;top:63.6px" width="18" height="9"><path d="M0 0H18L9 9Z" fill="#fff"/></svg><div class="abs" style="left:1038.3px;top:39.5px;width:251px;height:56.5px;background:linear-gradient(#4a4a4a,#7a7a7a);border:1px solid #686868;border-radius:8px 8px 0 0;overflow:hidden"><div class="abs" style="left:0;top:0;width:9.2px;height:60px;background:linear-gradient(#f4f400,#d4d400)"></div></div><span class="t" style="left:1052.69px;top:45.16px;font-size:18px;color:#f4f4f4;letter-spacing:0.592px;">Direct Display Control</span><div class="abs" style="left:1243.3999999999999px;top:47.7px;width:35.4px;height:35.4px;background:linear-gradient(#3a3a3a,#757575);border-radius:50%"></div><svg class="abs" style="left:1252.1px;top:63.6px" width="18" height="9"><path d="M0 0H18L9 9Z" fill="#fff"/></svg><div class="abs" style="left:1294px;top:39px;width:59.4px;height:49.4px;background:linear-gradient(#8e8e8e,#5a5a5a);border:2px solid #c8c8c8;border-radius:8px"></div><div class="abs" style="left:1354px;top:39px;width:66px;height:49.4px;background:linear-gradient(#8e8e8e,#5a5a5a);border:2px solid #c8c8c8;border-radius:8px"></div><div class="abs" style="left:1306.3000000000002px;top:46.199999999999996px;width:35.2px;height:35.2px;background:linear-gradient(#606060,#909090);border-radius:50%"></div><div class="abs" style="left:1360.1000000000001px;top:46.199999999999996px;width:35.2px;height:35.2px;background:linear-gradient(#606060,#909090);border-radius:50%"></div><svg class="abs" style="left:1311.9px;top:51.6px" width="24" height="24"><path d="M10.25 3.78 L10.52 0.70 L13.48 0.70 L13.75 3.78 L16.57 4.95 L18.95 2.96 L21.04 5.05 L19.05 7.43 L20.22 10.25 L23.30 10.52 L23.30 13.48 L20.22 13.75 L19.05 16.57 L21.04 18.95 L18.95 21.04 L16.57 19.05 L13.75 20.22 L13.48 23.30 L10.52 23.30 L10.25 20.22 L7.43 19.05 L5.05 21.04 L2.96 18.95 L4.95 16.57 L3.78 13.75 L0.70 13.48 L0.70 10.52 L3.78 10.25 L4.95 7.43 L2.96 5.05 L5.05 2.96 L7.43 4.95Z M12 6.4A5.6 5.6 0 1 0 12 17.6A5.6 5.6 0 1 0 12 6.4Z" fill="#d4d4d4" fill-rule="evenodd"/></svg><svg class="abs" style="left:1373.4px;top:54px" width="9" height="18"><path d="M9 0V17.6L0 8.8Z" fill="#fff"/></svg>
<div class="abs" style="left:550px;top:92px;width:740.5px;height:693px;background:#575757;box-shadow:1px 4px 5px 0 rgba(0,0,0,.7),-1px 0 3px rgba(0,0,0,.25)"></div><span class="t" style="left:839.00px;top:106.85px;font-size:22.5px;color:#f4f4f4;letter-spacing:0.297px;">Source Settings</span><div class="abs" style="left:551px;top:131px;width:705px;height:650px;overflow:hidden"><div class="abs" style="left:-551px;top:0"><span class="t" style="left:744.12px;top:-10.93px;font-size:18.7px;color:#f0f0f0;letter-spacing:0.370px;">Color Format</span><span class="t" style="left:795.92px;top:34.07px;font-size:18.7px;color:#f0f0f0;letter-spacing:1.041px;">Output</span><span class="t" style="left:803.54px;top:79.07px;font-size:18.7px;color:#f0f0f0;letter-spacing:-0.140px;">Range</span><span class="t" style="left:758.34px;top:127.87px;font-size:18.7px;color:#f0f0f0;letter-spacing:-0.031px;">Pattern APL</span><span class="t" style="left:757.34px;top:178.57px;font-size:18.7px;color:#f0f0f0;letter-spacing:-0.098px;">Pattern Size</span><span class="t" style="left:819.34px;top:227.87px;font-size:18.7px;color:#f0f0f0;letter-spacing:-0.945px;">HDR</span><span class="t" style="left:813.54px;top:272.87px;font-size:18.7px;color:#f0f0f0;letter-spacing:-1.200px;">EOTF</span><span class="t" style="left:619.34px;top:317.87px;font-size:18.7px;color:#f0f0f0;letter-spacing:0.228px;">Mastering Display Primaries</span><span class="t" style="left:599.34px;top:362.87px;font-size:18.7px;color:#f0f0f0;letter-spacing:0.308px;">Mastering Display White Point</span><span class="t" style="left:565.54px;top:403.67px;font-size:18.7px;color:#f0f0f0;letter-spacing:0.230px;">Max Mastering Display Luminance</span><span class="t" style="left:568.54px;top:441.67px;font-size:18.7px;color:#f0f0f0;letter-spacing:0.303px;">Min Mastering Display Luminance</span><span class="t" style="left:790.54px;top:479.67px;font-size:18.7px;color:#f0f0f0;letter-spacing:-0.473px;">MaxCLL</span><span class="t" style="left:781.54px;top:517.47px;font-size:18.7px;color:#f0f0f0;letter-spacing:-0.454px;">MaxFALL</span><span class="t" style="left:695.54px;top:558.67px;font-size:18.7px;color:#9a9a9a;letter-spacing:0.441px;">Dolby Vision Mode</span><span class="t" style="left:705.72px;top:603.67px;font-size:18.7px;color:#f0f0f0;letter-spacing:0.091px;">Specialty Patterns</span><div class="abs" style="left:875px;top:-21px;width:125px;height:35.6px;background:linear-gradient(#6b6b6b,#484848);border:1px solid #2c2c2c;box-shadow:inset 0 0 0 1px rgba(30,30,30,.28)"></div><span class="t" style="left:881.34px;top:-11.13px;font-size:18.7px;color:#f4f4f4;letter-spacing:-0.556px;">RGB 8-bit</span><svg class="abs" style="left:980.2px;top:-6.2px" width="12" height="7"><path d="M0 0H12L6 7Z" fill="#0a0a0a"/></svg><div class="abs" style="left:875px;top:24px;width:174.7px;height:35.8px;background:linear-gradient(#6b6b6b,#484848);border:1px solid #2c2c2c;box-shadow:inset 0 0 0 1px rgba(30,30,30,.28)"></div><span class="t" style="left:881.63px;top:33.97px;font-size:18.7px;color:#f4f4f4;letter-spacing:0.263px;">1920x1080p 60</span><svg class="abs" style="left:1029.9px;top:38.9px" width="12" height="7"><path d="M0 0H12L6 7Z" fill="#0a0a0a"/></svg><div class="abs" style="left:875px;top:69px;width:289px;height:35.8px;background:linear-gradient(#6b6b6b,#484848);border:1px solid #2c2c2c;box-shadow:inset 0 0 0 1px rgba(30,30,30,.28)"></div><span class="t" style="left:881.34px;top:78.97px;font-size:18.7px;color:#f4f4f4;letter-spacing:0.031px;">Limited (SMPTE video) range</span><svg class="abs" style="left:1144.2px;top:83.9px" width="12" height="7"><path d="M0 0H12L6 7Z" fill="#0a0a0a"/></svg><div class="abs" style="left:875px;top:114px;width:379px;height:43.5px;background:#222;border:1px solid #f2f2f2;box-shadow:inset 0 0 0 1px rgba(240,240,240,.45)"></div><div class="abs" style="left:876.5px;top:115.5px;width:68.5px;height:40.5px;background:#2440ad"></div><span class="t" style="left:1056.33px;top:127.82px;font-size:18.7px;color:#f4f4f4;letter-spacing:0.130px;">18</span><div class="abs" style="left:875px;top:165.5px;width:379px;height:43.5px;background:#222;border:1px solid #f2f2f2;box-shadow:inset 0 0 0 1px rgba(240,240,240,.45)"></div><div class="abs" style="left:876.5px;top:167.0px;width:68.5px;height:40.5px;background:#2440ad"></div><span class="t" style="left:1056.33px;top:179.32px;font-size:18.7px;color:#f4f4f4;letter-spacing:0.130px;">18</span><div class="abs" style="left:875px;top:218.2px;width:102.7px;height:35.4px;background:linear-gradient(#6b6b6b,#484848);border:1px solid #2c2c2c;box-shadow:inset 0 0 0 1px rgba(30,30,30,.28)"></div><span class="t" style="left:881.34px;top:227.97px;font-size:18.7px;color:#f4f4f4;letter-spacing:-0.364px;">HDR10</span><svg class="abs" style="left:957.9px;top:232.9px" width="12" height="7"><path d="M0 0H12L6 7Z" fill="#0a0a0a"/></svg><div class="abs" style="left:875px;top:263px;width:174.7px;height:35.7px;background:linear-gradient(#6b6b6b,#484848);border:1px solid #2c2c2c;box-shadow:inset 0 0 0 1px rgba(30,30,30,.28)"></div><span class="t" style="left:882.22px;top:272.92px;font-size:18.7px;color:#f4f4f4;letter-spacing:-0.785px;">SMPTE ST 2084</span><svg class="abs" style="left:1029.9px;top:277.9px" width="12" height="7"><path d="M0 0H12L6 7Z" fill="#0a0a0a"/></svg><div class="abs" style="left:875px;top:307.6px;width:65.7px;height:35.8px;background:linear-gradient(#6b6b6b,#484848);border:1px solid #2c2c2c;box-shadow:inset 0 0 0 1px rgba(30,30,30,.28)"></div><span class="t" style="left:881.34px;top:317.57px;font-size:18.7px;color:#f4f4f4;letter-spacing:-0.441px;">P3</span><svg class="abs" style="left:920.9px;top:322.5px" width="12" height="7"><path d="M0 0H12L6 7Z" fill="#0a0a0a"/></svg><div class="abs" style="left:875px;top:352.2px;width:77.7px;height:35.7px;background:linear-gradient(#6b6b6b,#484848);border:1px solid #2c2c2c;box-shadow:inset 0 0 0 1px rgba(30,30,30,.28)"></div><span class="t" style="left:881.34px;top:362.12px;font-size:18.7px;color:#f4f4f4;letter-spacing:0.311px;">D65</span><svg class="abs" style="left:932.9px;top:367.0px" width="12" height="7"><path d="M0 0H12L6 7Z" fill="#0a0a0a"/></svg><div class="abs" style="left:875px;top:396.79999999999995px;width:379px;height:29.2px;background:#222;border:1px solid #bcbcbc;box-shadow:inset 0 0 0 1px rgba(170,170,170,.35)"></div><span class="t" style="left:1206.34px;top:403.74px;font-size:18.5px;color:#f59400;letter-spacing:0.520px;">1000</span><div class="abs" style="left:875px;top:435px;width:379px;height:29.1px;background:#222;border:1px solid #bcbcbc;box-shadow:inset 0 0 0 1px rgba(170,170,170,.35)"></div><span class="t" style="left:1200.82px;top:441.94px;font-size:18.5px;color:#f59400;letter-spacing:0.558px;">0,005</span><div class="abs" style="left:875px;top:473px;width:379px;height:29.2px;background:#222;border:1px solid #bcbcbc;box-shadow:inset 0 0 0 1px rgba(170,170,170,.35)"></div><span class="t" style="left:1206.34px;top:479.94px;font-size:18.5px;color:#f59400;letter-spacing:0.520px;">1000</span><div class="abs" style="left:875px;top:511.1px;width:379px;height:29.2px;background:#222;border:1px solid #bcbcbc;box-shadow:inset 0 0 0 1px rgba(170,170,170,.35)"></div><span class="t" style="left:1216.91px;top:518.04px;font-size:18.5px;color:#f59400;letter-spacing:0.637px;">400</span><div class="abs" style="left:875px;top:549.5px;width:134.5px;height:35px;background:linear-gradient(#626262,#565656);border:1px solid #454545;box-shadow:inset 0 0 0 1px rgba(30,30,30,.28)"></div><span class="t" style="left:881.34px;top:559.07px;font-size:18.7px;color:#9c9c9c;letter-spacing:0.394px;">Perceptual</span><svg class="abs" style="left:989.7px;top:564.0px" width="12" height="7"><path d="M0 0H12L6 7Z" fill="#3a3a3a"/></svg><div class="abs" style="left:875px;top:594.5px;width:132px;height:35px;background:linear-gradient(#6b6b6b,#484848);border:1px solid #2c2c2c;box-shadow:inset 0 0 0 1px rgba(30,30,30,.28)"></div><span class="t" style="left:882.80px;top:604.07px;font-size:18.7px;color:#f4f4f4;letter-spacing:0.503px;">Alignment</span><svg class="abs" style="left:987.2px;top:609.0px" width="12" height="7"><path d="M0 0H12L6 7Z" fill="#0a0a0a"/></svg><div class="abs" style="left:881px;top:601.0px;width:90px;height:21.5px;border:1px dotted #111"></div></div></div><div class="abs" style="left:1261.8px;top:132px;width:20.2px;height:653px;background:#606060"></div><div class="abs" style="left:1263px;top:134px;width:17.3px;height:18px;background:linear-gradient(#939393,#828282);border-radius:4px"><svg width="17.3" height="18" style="display:block"><path d="M2.5 13L8.7 6.2L15 13Z" fill="#3e3e3e"/></svg></div><div class="abs" style="left:1263.2px;top:410px;width:17px;height:343.5px;background:#4a4a4a;border-radius:8.5px"></div><div class="abs" style="left:1263px;top:757px;width:17.3px;height:18.2px;background:linear-gradient(#939393,#828282);border-radius:4px"><svg width="17.3" height="18" style="display:block"><path d="M2.5 6L8.7 12.6L15 6Z" fill="#3e3e3e"/></svg></div>
<div class="abs" style="left:1392.5px;top:8.5px;width:7.5px;height:925px;background:linear-gradient(90deg,rgba(10,10,10,0),rgba(10,10,10,.5) 50%,rgba(10,10,10,.92))"></div>
</div></body></html>
